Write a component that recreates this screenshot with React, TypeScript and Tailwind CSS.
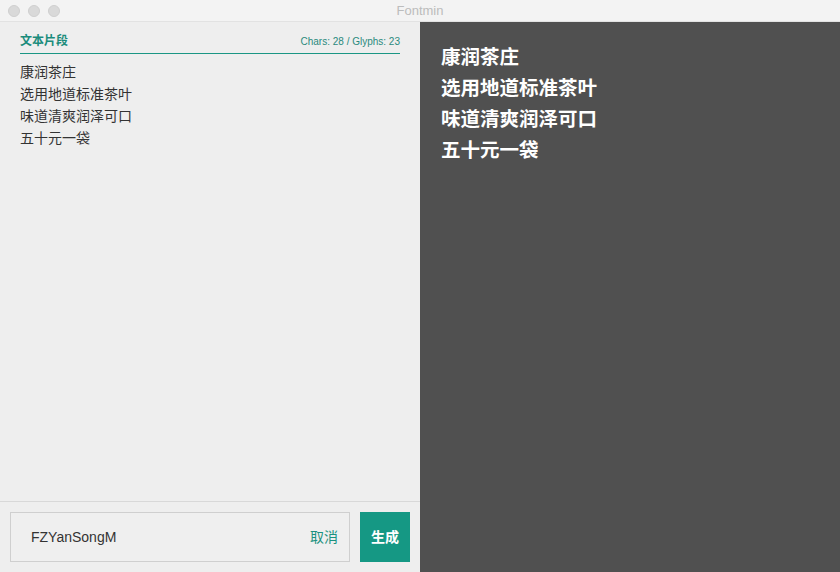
import React from 'react';

const lines = ['康润茶庄', '选用地道标准茶叶', '味道清爽润泽可口', '五十元一袋'];

const sans = { fontFamily: '"Helvetica Neue", "Liberation Sans", "Noto Sans CJK SC", sans-serif' };

const App: React.FC = () => {
  return (
    <div className="h-[572px] w-[840px] flex flex-col overflow-hidden" style={sans}>
      <div className="h-[22px] bg-[#f3f3f3] border-b border-[#e2e2e2] flex items-center relative">
        <div className="flex gap-2 pl-2">
          <span className="w-3 h-3 rounded-full bg-[#d9d9d9] border border-[#cfcfcf]"></span>
          <span className="w-3 h-3 rounded-full bg-[#d9d9d9] border border-[#cfcfcf]"></span>
          <span className="w-3 h-3 rounded-full bg-[#d9d9d9] border border-[#cfcfcf]"></span>
        </div>
        <div className="absolute inset-0 flex items-center justify-center text-[13px] text-[#bcbcbc]">Fontmin</div>
      </div>

      <div className="flex flex-1 min-h-0">
        <div className="w-[420px] bg-[#eeeeee] flex flex-col">
          <div className="flex-1 px-5 pt-[10px]">
            <div className="flex items-end justify-between pb-[3px]">
              <span className="text-[12px] font-bold text-[#1b8c7c]">文本片段</span>
              <span className="text-[10px] text-[#2a8a7d] pb-[1px]">Chars: 28 / Glyphs: 23</span>
            </div>
            <div className="h-px bg-[#1a9684]"></div>
            <div className="pt-[7px] text-[14px] leading-[22px] text-[#333333]">
              {lines.map((l) => (
                <div key={l}>{l}</div>
              ))}
            </div>
          </div>
          <div className="border-t border-[#d8d8d8] h-[71px] flex items-center gap-[10px] px-[10px]">
            <div className="flex-1 h-[50px] border border-[#cfcfcf] bg-[#efefef] flex items-center pl-5 pr-[11px]">
              <span className="flex-1 text-[14px] text-[#333333]">FZYanSongM</span>
              <span className="text-[14px] text-[#1b9280]">取消</span>
            </div>
            <button className="w-[50px] h-[50px] bg-[#159884] text-white text-[14px] font-bold">生成</button>
          </div>
        </div>

        <div className="flex-1 bg-[#505050] px-[21px] pt-[20px]">
          <div
            className="text-white text-[19.5px] font-bold leading-[31px]"
            style={{ fontFamily: '"Liberation Serif", "Noto Sans CJK SC", serif' }}
          >
            {lines.map((l) => (
              <div key={l}>{l}</div>
            ))}
          </div>
        </div>
      </div>
    </div>
  );
};

export default App;
